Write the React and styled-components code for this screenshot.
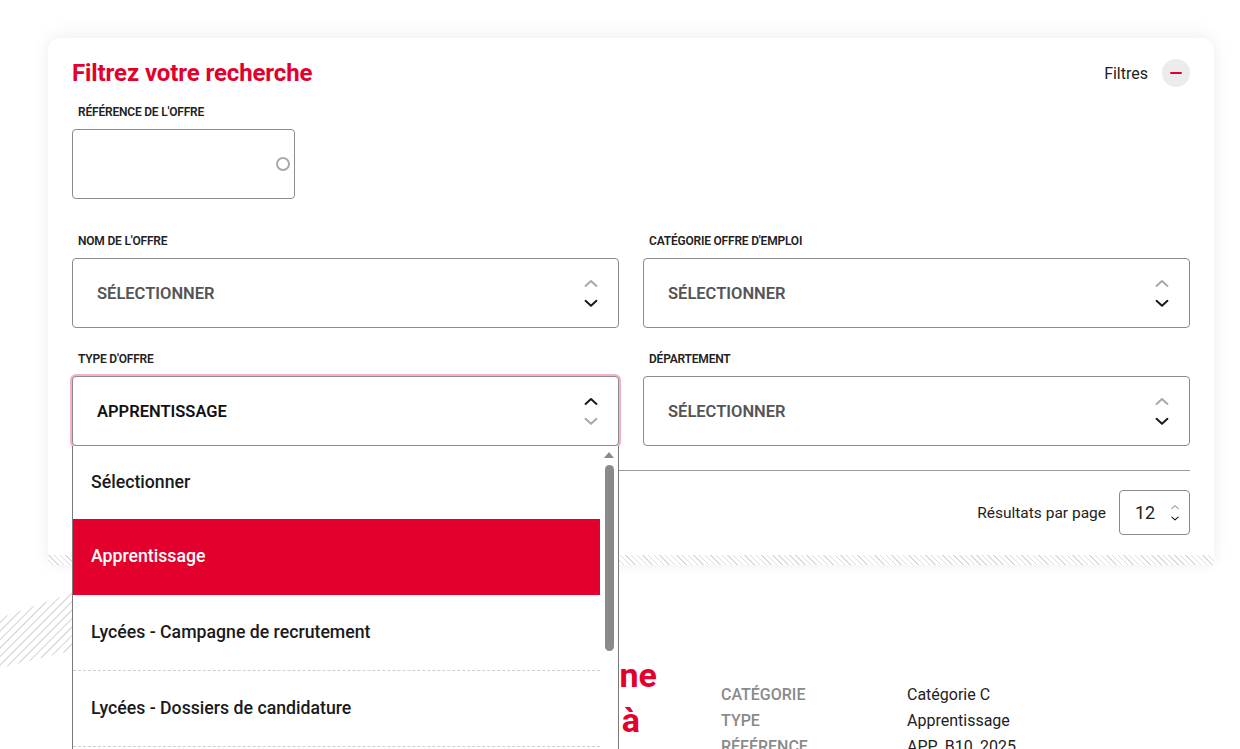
import styled, { createGlobalStyle } from 'styled-components';

const Global = createGlobalStyle`
  html, body {
    margin: 0;
    background: #fff;
  }
  body {
    font-family: Roboto, "Noto Sans", Arial, sans-serif;
    color: #222;
    overflow: hidden;
  }
  * { box-sizing: border-box; }
`;

const ROUGE = '#e3002c';

const Page = styled.main`
  position: relative;
  min-height: 749px;
  padding: 38px 26px 0 48px;
`;

const Hachures = styled.svg`
  position: absolute;
  left: 0;
  top: 588px;
  z-index: 0;
`;

const Carte = styled.section`
  position: relative;
  z-index: 1;
  background: #fff;
  border-radius: 12px 12px 0 0;
  box-shadow: 0 -4px 20px rgba(0, 0, 0, 0.05), 0 2px 12px rgba(0, 0, 0, 0.03);
  padding: 21px 24px 0;
`;

const Entete = styled.header`
  display: flex;
  align-items: center;
  justify-content: space-between;
  height: 28px;
`;

const Titre = styled.h2`
  margin: 0;
  font-size: 24px;
  font-weight: 700;
  color: ${ROUGE};
  letter-spacing: -0.1px;
`;

const Bascule = styled.div`
  display: flex;
  align-items: center;
  gap: 14px;
  font-size: 16px;
  color: #222;
`;

const BoutonRond = styled.button`
  width: 28px;
  height: 28px;
  border: 0;
  border-radius: 50%;
  background: #ececec;
  display: flex;
  align-items: center;
  justify-content: center;
  padding: 0;
  &::before {
    content: '';
    width: 12px;
    height: 2px;
    border-radius: 1px;
    background: ${ROUGE};
  }
`;

const Champ = styled.div`
  display: flex;
  flex-direction: column;
  gap: 9px;
  width: ${p => p.$largeur || 'auto'};
  margin-top: ${p => p.$haut || '0'};
  margin-bottom: ${p => p.$bas || '0'};
`;

const Etiquette = styled.label`
  padding-left: 6px;
  font-size: 12px;
  line-height: 16px;
  font-weight: 600;
  letter-spacing: -0.2px;
  text-transform: uppercase;
  color: #222;
`;

const Saisie = styled.div`
  position: relative;
  height: 70px;
  border: 1px solid #8c8c8c;
  border-radius: 4px;
  background: #fff;
`;

const Anneau = styled.span`
  position: absolute;
  right: 4px;
  top: 27px;
  width: 14px;
  height: 14px;
  border: 2px solid #aaa;
  border-radius: 50%;
`;

const Grille = styled.div`
  display: grid;
  grid-template-columns: 1fr 1fr;
  column-gap: 24px;
  row-gap: 23px;
`;

const Selecteur = styled.div`
  position: relative;
  height: 70px;
  display: flex;
  align-items: center;
  justify-content: space-between;
  padding: 0 20px 0 24px;
  border: 1px solid #8c8c8c;
  border-radius: 4px;
  background: #fff;
  box-shadow: ${p => (p.$ouvert ? '0 0 0 2px #f5b3c1' : 'none')};
  font-size: 16.5px;
  font-weight: 600;
  text-transform: uppercase;
  color: ${p => (p.$valeur ? '#111' : '#555')};
`;

const Liste = styled.div`
  position: absolute;
  z-index: 10;
  top: calc(100% + 1px);
  left: -1px;
  right: -1px;
  height: 330px;
  display: flex;
  background: #fff;
  border-left: 1px solid #7a7a7a;
  border-right: 1px solid #7a7a7a;
  text-transform: none;
`;

const Options = styled.ul`
  flex: 1;
  margin: 0;
  padding: 0;
  list-style: none;
`;

const Option = styled.li`
  height: 76px;
  display: flex;
  align-items: center;
  padding: 0 0 1px 18px;
  font-size: 17.7px;
  font-weight: 500;
  color: ${p => (p.$actif ? '#fff' : '#1a1a1a')};
  background: ${p => (p.$actif ? ROUGE : '#fff')};
  border-bottom: 1px dashed ${p => (p.$pointille ? '#cfcfcf' : 'transparent')};
  &:first-child {
    height: 73px;
  }
`;

const Defilement = styled.div`
  width: 18px;
  display: flex;
  flex-direction: column;
  align-items: center;
  padding-top: 6px;
  gap: 7px;
  &::before {
    content: '';
    border-left: 5px solid transparent;
    border-right: 5px solid transparent;
    border-bottom: 6px solid #8a8a8a;
  }
`;

const Curseur = styled.div`
  width: 9px;
  height: 186px;
  border-radius: 5px;
  background: #8a8a8a;
`;

const Separateur = styled.hr`
  margin: 24px 0 0;
  border: 0;
  border-top: 1px solid #9a9a9a;
`;

const Pied = styled.div`
  display: flex;
  justify-content: flex-end;
  align-items: center;
  gap: 13px;
  padding: 19px 0 20px;
  font-size: 15.5px;
  color: #222;
`;

const Nombre = styled.div`
  width: 71px;
  height: 45px;
  display: flex;
  align-items: center;
  justify-content: space-between;
  padding: 0 10px 0 15px;
  border: 1px solid #8c8c8c;
  border-radius: 4px;
  font-size: 18px;
`;

const Bande = styled.div`
  height: 10px;
  margin: 0 -24px;
  background: repeating-linear-gradient(45deg, #fff 0 3px, #dcdcdc 3px 4px);
`;

const Offre = styled.article`
  display: flex;
  gap: 64px;
  margin-top: 88px;
  padding: 0 24px;
`;

const OffreTitre = styled.h3`
  width: 585px;
  margin: 0;
  font-size: 34px;
  line-height: 45px;
  font-weight: 700;
  color: ${ROUGE};
  white-space: nowrap;
  text-align: right;
`;

const Ligne = styled.span`
  display: block;
  padding-right: ${p => p.$retrait || '0'};
`;

const Details = styled.dl`
  margin: 29px 0 0;
  display: grid;
  grid-template-columns: 186px auto;
  line-height: 26px;
  font-size: 16px;
  dt {
    color: #8a8a8a;
    font-weight: 500;
    text-transform: uppercase;
  }
  dd {
    margin: 0;
    color: #222;
  }
`;

const Chevrons = ({ haut, taille = 14 }) => (
  <svg width={taille} height={taille * 2.2} viewBox="0 0 14 31" fill="none" strokeWidth="2" strokeLinecap="round" strokeLinejoin="round">
    <polyline points="1.5,8 7,3 12.5,8" stroke={haut ? '#1a1a1a' : '#a8a8a8'} />
    <polyline points="1.5,23 7,28 12.5,23" stroke={haut ? '#a8a8a8' : '#1a1a1a'} />
  </svg>
);

const champs = [
  { id: 'nom', label: "Nom de l'offre" },
  { id: 'cat', label: "Catégorie offre d'emploi" },
  { id: 'type', label: "Type d'offre", valeur: 'Apprentissage', ouvert: true },
  { id: 'dep', label: 'Département' },
];

const options = [
  { id: 1, texte: 'Sélectionner' },
  { id: 2, texte: 'Apprentissage', actif: true },
  { id: 3, texte: 'Lycées - Campagne de recrutement', pointille: true },
  { id: 4, texte: 'Lycées - Dossiers de candidature', pointille: true },
  { id: 5, texte: 'Stages', pointille: true },
];

const App = () => (
  <Page>
    <Global />
    <Hachures width="80" height="90" viewBox="0 0 80 90">
      <defs>
        <pattern id="raies" width="6" height="6" patternUnits="userSpaceOnUse" patternTransform="rotate(45)">
          <line x1="0" y1="0" x2="0" y2="6" stroke="#c4c4c4" strokeWidth="1.6" />
        </pattern>
      </defs>
      <polygon points="0,30 74,4 74,62 0,80" fill="url(#raies)" />
    </Hachures>

    <Carte>
      <Entete>
        <Titre>Filtrez votre recherche</Titre>
        <Bascule>
          Filtres
          <BoutonRond aria-label="Réduire les filtres" />
        </Bascule>
      </Entete>

      <Champ $largeur="223px" $haut="17px" $bas="34px">
        <Etiquette>Référence de l'offre</Etiquette>
        <Saisie>
          <Anneau />
        </Saisie>
      </Champ>

      <Grille>
        {champs.map(c => (
          <Champ key={c.id}>
            <Etiquette>{c.label}</Etiquette>
            <Selecteur $ouvert={c.ouvert} $valeur={c.valeur}>
              {c.valeur || 'Sélectionner'}
              <Chevrons haut={c.ouvert} />
              {c.ouvert && (
                <Liste>
                  <Options>
                    {options.map(o => (
                      <Option key={o.id} $actif={o.actif} $pointille={o.pointille}>
                        {o.texte}
                      </Option>
                    ))}
                  </Options>
                  <Defilement>
                    <Curseur />
                  </Defilement>
                </Liste>
              )}
            </Selecteur>
          </Champ>
        ))}
      </Grille>

      <Separateur />

      <Pied>
        Résultats par page
        <Nombre>
          12
          <Chevrons taille={8} />
        </Nombre>
      </Pied>
      <Bande />
    </Carte>

    <Offre>
      <OffreTitre>
        <Ligne>Apprenti(e) agent(e) de cuisine</Ligne>
        <Ligne $retrait="17px">en restauration collective à</Ligne>
      </OffreTitre>
      <Details>
        <dt>Catégorie</dt>
        <dd>Catégorie C</dd>
        <dt>Type</dt>
        <dd>Apprentissage</dd>
        <dt>Référence</dt>
        <dd>APP_B10_2025</dd>
      </Details>
    </Offre>
  </Page>
);

export default App;
